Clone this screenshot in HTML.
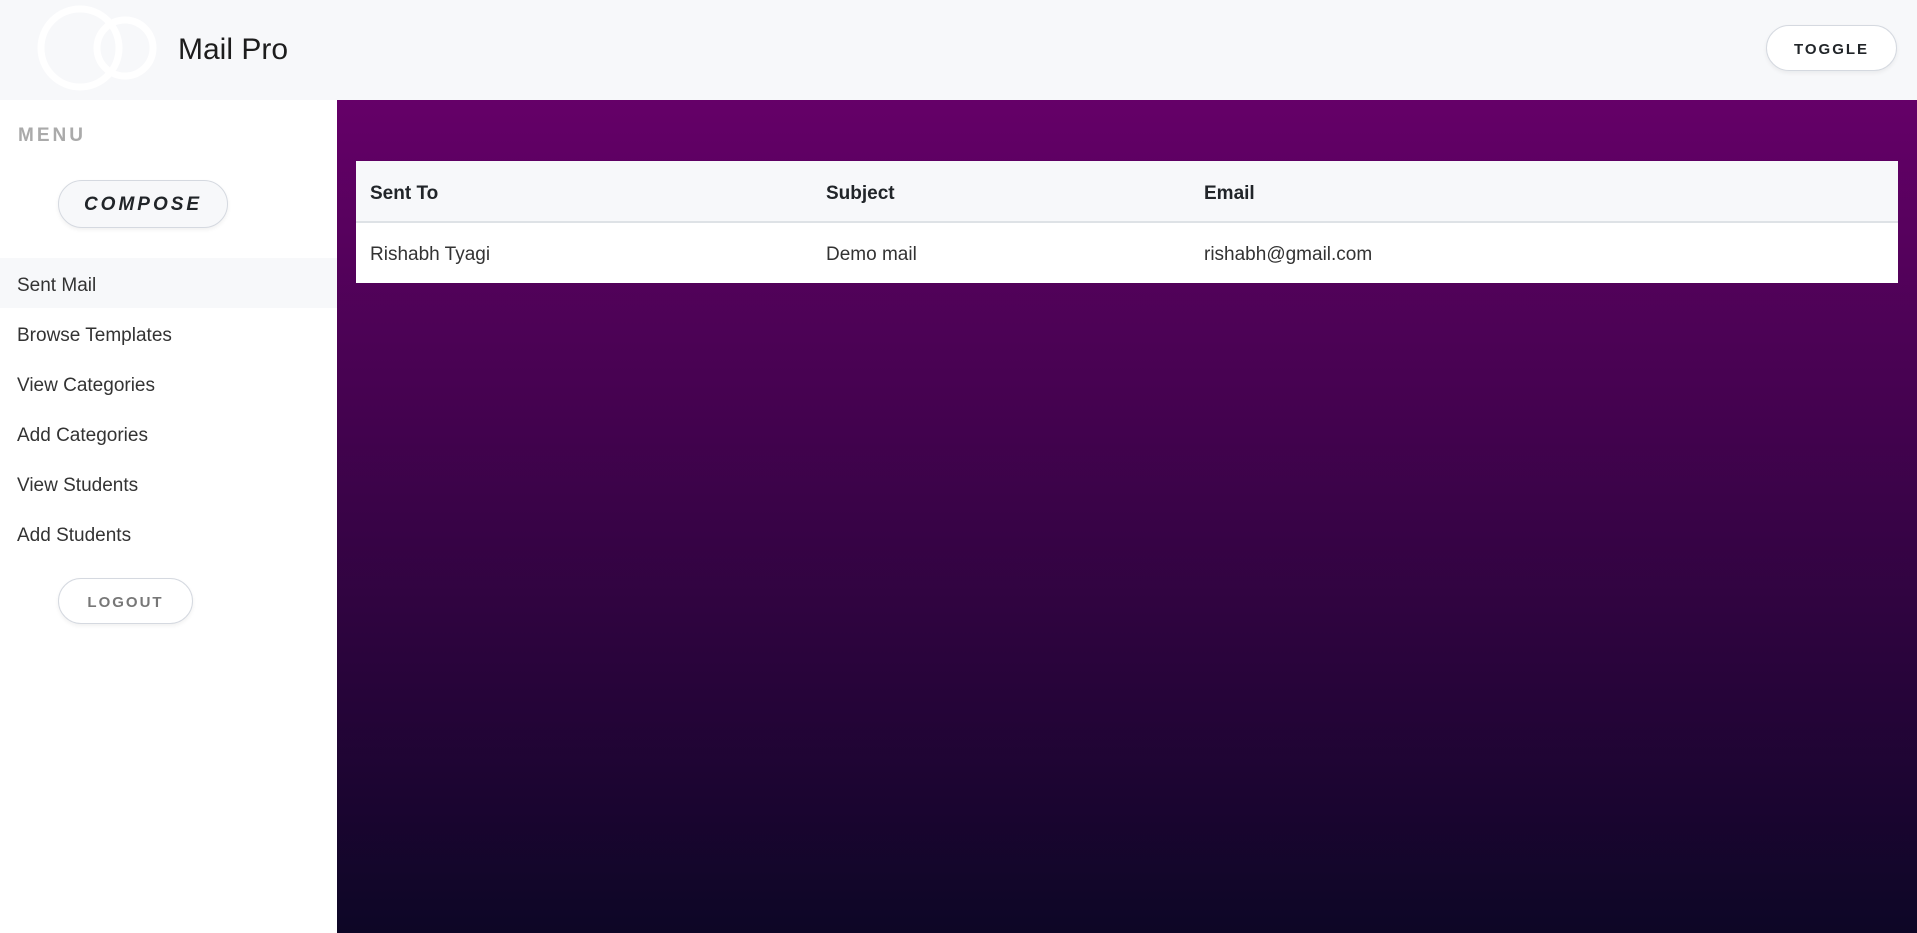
<!DOCTYPE html>
<html><head><meta charset="utf-8"><style>
*{margin:0;padding:0;box-sizing:border-box}
html,body{width:1917px;height:933px;overflow:hidden;font-family:"Liberation Sans",sans-serif;color:#212529}
.header{position:absolute;left:0;top:0;width:1917px;height:100px;background:#f7f8fa}
.title{position:absolute;left:178px;top:33px;font-size:30px;color:#1d1d1d}
.toggle{position:absolute;left:1766px;top:25px;width:131px;height:46px;border:1px solid #d5d9e0;border-radius:23px;background:#fff;font-size:15px;font-weight:bold;letter-spacing:2px;text-align:center;line-height:48px;color:#212529;box-shadow:0 2px 4px rgba(0,0,0,.06)}
.side{position:absolute;left:0;top:100px;width:337px;height:833px;background:#fff}
.menu{position:absolute;left:18px;top:25px;font-size:19px;font-weight:bold;letter-spacing:3px;color:#aaa}
.compose{position:absolute;left:58px;top:80px;width:170px;height:48px;border:1px solid #d5d9e0;border-radius:24px;background:#f7f8fa;font-size:19px;font-weight:bold;font-style:italic;letter-spacing:3px;text-align:center;line-height:48px;box-shadow:0 2px 4px rgba(0,0,0,.06)}
.item{position:absolute;left:0;width:337px;height:50px;padding-left:17px;padding-top:3px;line-height:50px;font-size:19px;color:#333}
.logout{position:absolute;left:58px;top:478px;width:135px;height:46px;border:1px solid #d5d9e0;border-radius:23px;background:#fff;font-size:15px;font-weight:bold;letter-spacing:2px;text-align:center;line-height:48px;color:#777;box-shadow:0 2px 4px rgba(0,0,0,.06)}
.main{position:absolute;left:337px;top:100px;width:1580px;height:833px;background:linear-gradient(#650068,#0d0626)}
table{position:absolute;left:19px;top:61px;width:1542px;border-collapse:collapse;font-size:19px}
th{background:#f7f8fa;text-align:left;height:61px;padding-left:14px;padding-top:6px;border-bottom:2px solid #dee2e6;font-weight:bold}
td{background:#fff;height:61px;padding-left:14px;padding-top:4px;color:#333}
</style></head><body>
<div class="header">
<svg width="170" height="100" style="position:absolute;left:0;top:0">
<circle cx="80" cy="48" r="39" fill="none" stroke="#fff" stroke-width="7"/>
<circle cx="125" cy="48" r="28" fill="none" stroke="#fff" stroke-width="7"/>
</svg>
<div class="title">Mail Pro</div>
<div class="toggle">TOGGLE</div>
</div>
<div class="side">
<div class="menu">MENU</div>
<div class="compose">COMPOSE</div>
<div class="item" style="top:158px;background:#f7f8fa">Sent Mail</div>
<div class="item" style="top:208px">Browse Templates</div>
<div class="item" style="top:258px">View Categories</div>
<div class="item" style="top:308px">Add Categories</div>
<div class="item" style="top:358px">View Students</div>
<div class="item" style="top:408px">Add Students</div>
<div class="logout">LOGOUT</div>
</div>
<div class="main">
<table>
<tr><th style="width:456px">Sent To</th><th style="width:378px">Subject</th><th>Email</th></tr>
<tr><td>Rishabh Tyagi</td><td>Demo mail</td><td>rishabh@gmail.com</td></tr>
</table>
</div>
</body></html>
